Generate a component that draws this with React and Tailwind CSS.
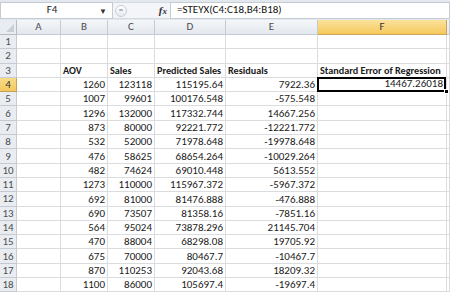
import React from "react";

const cols = ["A", "B", "C", "D", "E", "F", ""];
const data = [
  [1260, 123118, "115195.64", "7922.36"],
  [1007, 99601, "100176.548", "-575.548"],
  [1296, 132000, "117332.744", "14667.256"],
  [873, 80000, "92221.772", "-12221.772"],
  [532, 52000, "71978.648", "-19978.648"],
  [476, 58625, "68654.264", "-10029.264"],
  [482, 74624, "69010.448", "5613.552"],
  [1273, 110000, "115967.372", "-5967.372"],
  [692, 81000, "81476.888", "-476.888"],
  [690, 73507, "81358.16", "-7851.16"],
  [564, 95024, "73878.296", "21145.704"],
  [470, 88004, "68298.08", "19705.92"],
  [675, 70000, "80467.7", "-10467.7"],
  [870, 110253, "92043.68", "18209.32"],
  [1100, 86000, "105697.4", "-19697.4"],
];

const font = { fontFamily: '"Liberation Sans Narrow", Carlito, "Liberation Sans", sans-serif' };

function Cell({ children, align = "right", bold = false }) {
  return (
    <div
      className={`h-[14.3px] border-r border-b border-[#dadcdd] flex items-end overflow-visible whitespace-nowrap leading-[13px] text-[#1a1a1a] ${
        align === "right" ? "justify-end pr-[2px]" : "justify-start pl-[2px]"
      } ${bold ? "font-bold text-[10.2px]" : "text-[11px]"}`}
    >
      {children}
    </div>
  );
}

function RowHead({ n, active }) {
  return (
    <div
      className={`h-[14.3px] border-r border-b flex items-center justify-center text-[11px] leading-none ${
        active
          ? "bg-gradient-to-b from-[#f9dc8a] to-[#f3c95c] border-[#c2a15a] text-[#333]"
          : "bg-[#e9edf2] border-[#c5cbd3] text-[#4d4d4d]"
      }`}
    >
      {n}
    </div>
  );
}

export default function App() {
  const rows = [];
  for (let r = 1; r <= 18; r++) {
    const cells = [];
    cells.push(<RowHead key="h" n={r} active={r === 4} />);
    for (let c = 0; c < 7; c++) {
      let content = null;
      let align = "right";
      let bold = false;
      if (r === 3) {
        if (c === 1) { content = "AOV"; align = "left"; bold = true; }
        if (c === 2) { content = "Sales"; align = "left"; bold = true; }
        if (c === 3) { content = "Predicted Sales"; align = "left"; bold = true; }
        if (c === 4) { content = "Residuals"; align = "left"; bold = true; }
        if (c === 5) { content = "Standard Error of Regression"; align = "left"; bold = true; }
      }
      if (r >= 4) {
        const d = data[r - 4];
        if (c === 1) content = d[0];
        if (c === 2) content = d[1];
        if (c === 3) content = d[2];
        if (c === 4) content = d[3];
      }
      if (r === 4 && c === 5) {
        cells.push(
          <div key={c} className="relative h-[14.3px] border-b border-r border-[#dadcdd]">
            <div className="absolute -left-[1px] -top-[1px] right-0 bottom-[-1px] border-2 border-black flex items-end justify-end pr-[1px] text-[11px] leading-[12px] text-[#1a1a1a]">
              14467.26018
            </div>
            <div className="absolute right-[-3px] bottom-[-3px] w-[5px] h-[5px] bg-black border border-white" />
          </div>
        );
        continue;
      }
      cells.push(
        <Cell key={c} align={align} bold={bold}>
          {content}
        </Cell>
      );
    }
    rows.push(<React.Fragment key={r}>{cells}</React.Fragment>);
  }

  return (
    <div className="w-[450px] h-[292px] overflow-hidden bg-white" style={font}>
      <div className="h-[20px] bg-[#e3e8ee] pt-[2px] pb-[1px] flex items-stretch">
        <div className="w-[113px] bg-white border border-[#c5cbd3] flex items-center relative">
          <span className="flex-1 text-center text-[11px] text-[#222] pl-[4px]">F4</span>
          <span className="text-[8px] text-[#333] pr-[5px]">▼</span>
        </div>
        <div className="w-[57px] bg-[#f3f5f8] flex items-center pl-[2px] border-y border-[#d5dae0]">
          <div className="w-[12px] h-[12px] rounded-full border border-[#c9ced6] bg-gradient-to-b from-white to-[#e6e9ee] flex items-start justify-center">
            <div className="w-[4px] h-[2px] mt-[3px] bg-[#b0b6bf] rounded" />
          </div>
          <div className="flex-1" />
          <span className="italic font-bold text-[11px] text-[#333] pr-[3px]" style={{ fontFamily: '"Liberation Serif", serif' }}>
            f<span className="text-[9px]">x</span>
          </span>
        </div>
        <div className="flex-1 bg-white border border-[#c5cbd3] flex items-center pl-[6px] text-[11px] text-[#111]">
          =STEYX(C4:C18,B4:B18)
        </div>
      </div>
      <div className="grid grid-cols-[17px_44px_47px_47px_71px_92px_129px_1fr]">
        <div className="h-[15px] bg-[#e9edf2] border-r border-b border-[#b6bdc7] relative">
          <div
            className="absolute right-[2px] bottom-[2px] w-0 h-0"
            style={{ borderLeft: "8px solid transparent", borderBottom: "8px solid #c9cfd6" }}
          />
        </div>
        {cols.map((c, i) => (
          <div
            key={i}
            className={`h-[15px] border-r border-b flex items-center justify-center text-[11px] ${
              c === "F"
                ? "bg-gradient-to-b from-[#fbe29a] to-[#f5c95a] border-[#c9a45a] text-[#333]"
                : "bg-gradient-to-b from-[#f4f6f9] to-[#e3e8ee] border-[#c5cbd3] text-[#4d4d4d]"
            }`}
          >
            {c}
          </div>
        ))}
        {rows}
      </div>
    </div>
  );
}
